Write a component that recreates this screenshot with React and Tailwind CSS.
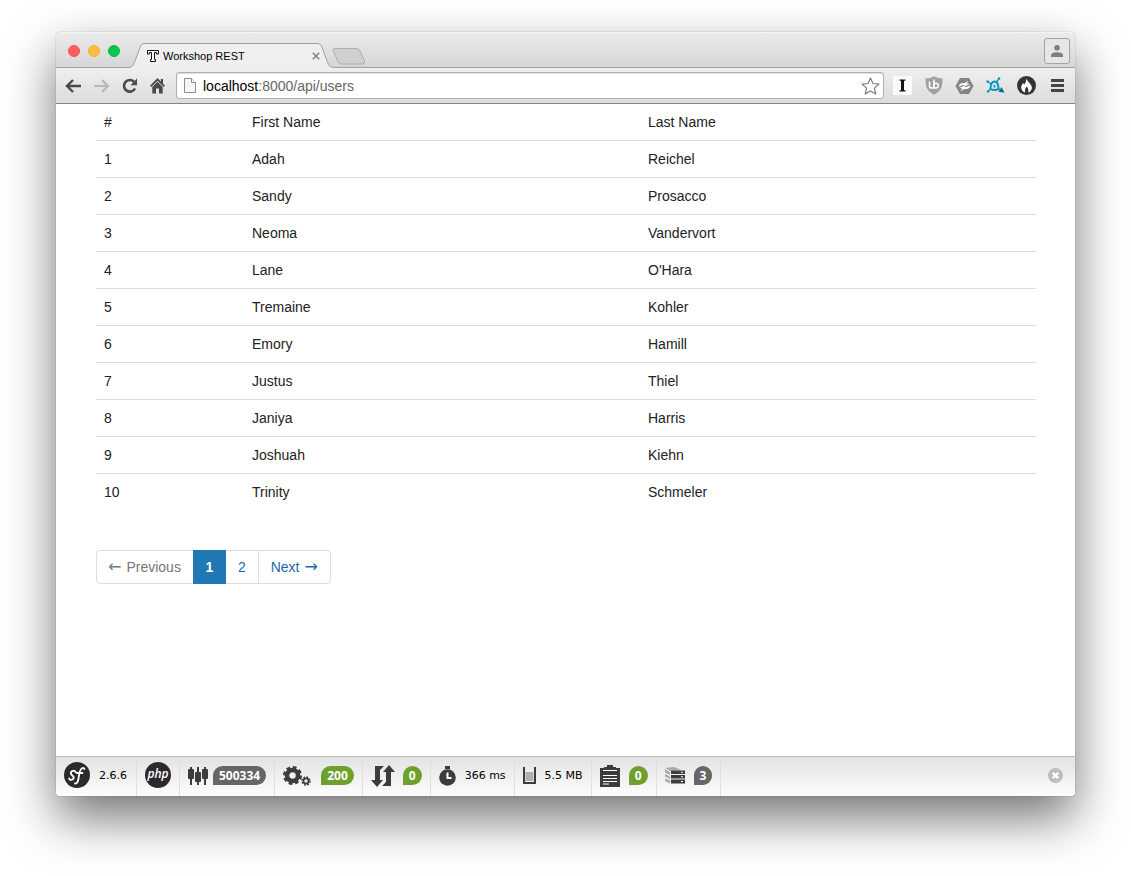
import React from "react";

const users = [
  ["1", "Adah", "Reichel"],
  ["2", "Sandy", "Prosacco"],
  ["3", "Neoma", "Vandervort"],
  ["4", "Lane", "O'Hara"],
  ["5", "Tremaine", "Kohler"],
  ["6", "Emory", "Hamill"],
  ["7", "Justus", "Thiel"],
  ["8", "Janiya", "Harris"],
  ["9", "Joshuah", "Kiehn"],
  ["10", "Trinity", "Schmeler"],
];

function TabStrip() {
  return (
    <div className="flex h-9 items-stretch rounded-t-[5px] border-b border-[#a0a0a0] border-t border-t-[#f4f4f4] bg-linear-to-b from-[#ebebeb] to-[#d6d6d6]">
      <div className="flex items-center gap-2 pt-[2px] pl-3">
        <button aria-label="Close window" className="size-3 rounded-full border border-[#ee5550] bg-[#fc605c]" />
        <button aria-label="Minimise window" className="size-3 rounded-full border border-[#eeb03a] bg-[#fdbc40]" />
        <button aria-label="Zoom window" className="size-3 rounded-full border border-[#12b944] bg-[#05c84b]" />
      </div>
      <div className="relative -mb-px ml-2 flex w-[208px] items-center pt-[14px] pr-4 pb-1 pl-[19px]">
        <svg className="absolute bottom-0 left-0" width="210" height="25" viewBox="0 0 210 25" fill="none" aria-hidden="true">
          <path d="M0 24.5C4 24.5 5 23 6 20.5L12 4.5C13 1.5 14 .5 17 .5H189C192 .5 193 1.500 194 4.500L200 20.500C201 23 202 24.500 208 24.500V25H0Z" fill="#efefef" />
          <path d="M0 24.500C4 24.500 5 23 6 20.500L12 4.500C13 1.500 14 .5 17 .5H189C192 .5 193 1.500 194 4.500L200 20.500C201 23 202 24.500 208 24.500" stroke="#a0a0a0" />
        </svg>
        <svg className="relative mr-1 shrink-0" width="12" height="12" viewBox="0 0 12 12" fill="#fff" stroke="#111" aria-hidden="true">
          <path d="M.5 .5H11.500V4H9.500V2.500H7.500V9.500H8.500V11.500H3.500V9.500H4.500V2.500H2.500V4H.5Z" />
        </svg>
        <span className="relative flex-1 text-[11px] leading-3 text-black">Workshop REST</span>
        <button aria-label="Close tab" className="relative">
          <svg width="8" height="8" viewBox="0 0 8 8" stroke="#808080" strokeWidth="1.500"><path d="M.8 .8 7.200 7.200M7.200 .8 .8 7.200" /></svg>
        </button>
      </div>
      <button aria-label="New tab" className="-ml-1 self-end pb-[2px]">
        <svg className="block" width="34" height="17" viewBox="0 0 34 17">
          <path d="M3 .5H24Q27 .5 28 3L32.500 13Q33.200 16 30 16H10Q7 16 6 13.500L1.200 3Q.5 .5 3 .5Z" fill="#d0d0d0" stroke="#adadad" />
        </svg>
      </button>
      <button aria-label="Profile" className="mt-[5px] mr-[5px] mb-[3px] ml-auto flex w-[26px] items-center justify-center rounded-[3px] border border-[#a3a3a3] bg-[#e6e6e6]">
        <svg width="12" height="12" viewBox="0 0 12 12" fill="#7f7f7f"><circle cx="6" cy="2.800" r="2.800" /><path d="M0 12V10.500C0 8 3 7.300 6 7.300S12 8 12 10.500V12Z" /></svg>
      </button>
    </div>
  );
}

function Toolbar() {
  return (
    <div className="flex h-9 items-center border-b border-[#858585] bg-linear-to-b from-[#efefef] to-[#dcdcdc] pr-[11px] pl-[9px]">
      <div className="flex items-center gap-3">
        <button aria-label="Back">
          <svg width="17" height="14" viewBox="0 0 17 14" fill="none" stroke="#4a4a4a" strokeWidth="2.400"><path d="M8 1 2 7l6 6M2 7H16" /></svg>
        </button>
        <button aria-label="Forward">
          <svg width="16" height="14" viewBox="0 0 16 14" fill="none" stroke="#b9b9b9" strokeWidth="2.200"><path d="M8 1l6 6-6 6M14 7H0" /></svg>
        </button>
        <button aria-label="Reload">
          <svg width="16" height="16" viewBox="0 0 16 16"><path d="M13 10.500A5.800 5.800 0 1 1 12 3.800" fill="none" stroke="#4a4a4a" strokeWidth="2.600" /><path d="M15 .5V7.200H8.500Z" fill="#4a4a4a" /></svg>
        </button>
        <button aria-label="Home">
          <svg width="15" height="16" viewBox="0 0 15 16" fill="#4a4a4a"><path d="M7.500 0 0 7.700l1.300 1.300L7.500 2.800l6.200 6.200L15 7.700l-2-2V1h-2.200v2.400Z" /><path d="M2.300 9 7.500 3.800 12.700 9V15.500H9V10.500H6V15.500H2.300Z" /></svg>
        </button>
      </div>
      <form className="ml-[11px] flex h-[27px] flex-1 items-center rounded-[3px] border border-[#b0b0b0] bg-white pr-[3px] pl-[7px] shadow-[inset_0_1px_1px_#ddd]">
        <svg width="12" height="15" viewBox="0 0 12 15" fill="#f6f6f6" stroke="#8d8d8d"><path d="M.5 .5H7.500L11.500 4.500V14.500H.5Z" /><path d="M7.500 .5V4.500H11.500" fill="#fff" /></svg>
        <div className="relative ml-[7px] flex-1">
          <div aria-hidden="true" className="text-[14px] leading-5 whitespace-pre text-[#666]"><span className="text-black">localhost</span>:8000/api/users</div>
          <input aria-label="Address" defaultValue="localhost:8000/api/users" className="absolute inset-0 w-full bg-transparent text-[14px] leading-5 text-transparent outline-none" />
        </div>
        <button type="button" aria-label="Bookmark">
          <svg width="19" height="18" viewBox="0 0 19 18" fill="#fff" stroke="#7d7d7d" strokeWidth="1.200" strokeLinejoin="round"><path d="M9.500 1 11.900 6.500 18 7.100 13.400 11.100 14.800 17 9.500 13.900 4.200 17 5.600 11.100 1 7.100 7.100 6.500Z" /></svg>
        </button>
      </form>
      <div className="ml-[9px] flex items-center gap-3">
        <button aria-label="Instapaper" className="mr-px size-[19px] bg-[#fafafa]">
          <svg width="19" height="19" viewBox="0 0 19 19" fill="#111"><path d="M6.500 3.500H12.500V4.500L11 5V14L12.500 14.500V15.500H6.500V14.500L8 14V5L6.500 4.500Z" /></svg>
        </button>
        <button aria-label="uBlock">
          <svg width="18" height="19" viewBox="0 0 18 19"><path d="M9 .3Q12.500 2.500 17.500 2.500C17.500 11 16 15 9 18.700C2 15 .5 11 .5 2.500Q5.500 2.500 9 .3Z" fill="#a0a0a0" /><path d="M4.500 5.500V10.200Q4.500 12 6.500 12H8.800V5.500M9 3.500V12M8.800 9.500Q8.800 7.300 11 7.300T13.300 9.600 11 12H8.800" fill="none" stroke="#fff" strokeWidth="1.500" /></svg>
        </button>
        <button aria-label="Postman">
          <svg width="19" height="18" viewBox="0 0 19 18"><path d="M5 1H14L18.500 9 14 17H5L.5 9Z" fill="#858585" /><path d="M3.500 9.500C4 6.500 7.500 5.500 10 6L13 3.800 12 6.700 15 7 9.500 9.200 9 7.800ZM15.500 8.500C15 11.500 11.500 12.500 9 12L6 14.200 7 11.300 4 11 9.500 8.800 10 10.200Z" fill="#fff" /></svg>
        </button>
        <button aria-label="Request tool">
          <svg width="19" height="17" viewBox="0 0 19 17" fill="none" stroke="#1295b8"><path d="M4.500 12C4.500 7 6 4.500 8.700 4.500S12.500 7 12.500 12Q8.500 14 4.500 12Z" fill="#c9f1fa" strokeWidth="2" /><path d="M10.500 5 13 1.500M5 7 1.500 4.500M4.500 12 2 14.500M12 11.500 16 14" strokeWidth="1.300" /><path d="M13 1.500h.1M1.500 4.500h.1M2 14.500h.1" strokeWidth="2.500" strokeLinecap="round" /><path d="M8.500 8v2.500" strokeWidth="2" /><path d="M15.500 10 18.500 15.500 12.500 15Z" fill="#08708f" stroke="none" /></svg>
        </button>
        <button aria-label="Flame">
          <svg width="19" height="19" viewBox="0 0 19 19"><circle cx="9.500" cy="9.500" r="9.500" fill="#333" /><path d="M9.200 2C9.500 5 13.800 7 14.800 11C15.200 14 13 16.200 11 16.500C12 14 11 12 9.700 10.500C8.500 12 7.300 14 8.300 16.500C5.500 16 4 13.500 4.200 11C4.500 9 5.500 8 6.300 7L7.300 8.500C8.700 6.500 9.500 4.500 9.200 2Z" fill="#fff" /></svg>
        </button>
        <button aria-label="Menu" className="ml-[3px]">
          <svg width="13" height="13" viewBox="0 0 13 13" fill="#454545"><path d="M0 0H13V3H0ZM0 5H13V8H0ZM0 10H13V13H0Z" /></svg>
        </button>
      </div>
    </div>
  );
}

function ArrowGlyph({ children }) {
  return <span className="font-['DejaVu_Sans',sans-serif] text-[16px] leading-5">{children}</span>;
}

function UsersPage() {
  return (
    <main className="flex-1 pr-[39px] pl-10 text-[14px] leading-5 text-[#222]">
      <table className="w-full table-fixed border-collapse text-left">
        <colgroup>
          <col className="w-[148px]" />
          <col />
          <col />
        </colgroup>
        <thead>
          <tr className="border-b border-[#ddd]">
            {["#", "First Name", "Last Name"].map((h) => (
              <th key={h} className="p-2 font-normal">{h}</th>
            ))}
          </tr>
        </thead>
        <tbody>
          {users.map((row) => (
            <tr key={row[0]} className="border-b border-[#ddd] last:border-b-0">
              {row.map((cell) => (
                <td key={cell} className="p-2">{cell}</td>
              ))}
            </tr>
          ))}
        </tbody>
      </table>
      <nav aria-label="Pagination" className="mt-10">
        <ul className="inline-flex h-[34px] items-stretch rounded-[4px] border border-[#ddd]">
          <li className="flex gap-[5px] py-[6px] pr-3 pl-[11px] text-[#777]"><ArrowGlyph>←</ArrowGlyph>Previous</li>
          <li className="-my-px bg-[#2079b5] text-white"><a href="#page-1" aria-current="page" className="block w-[33px] py-[7px] text-center font-bold">1</a></li>
          <li className="text-[#2368a9]"><a href="#page-2" className="block px-3 py-[6px]">2</a></li>
          <li className="border-l border-[#ddd] text-[#2368a9]"><a href="#page-2" className="flex gap-[5px] px-3 py-[6px]">Next<ArrowGlyph>→</ArrowGlyph></a></li>
        </ul>
      </nav>
    </main>
  );
}

function Block({ children, className }) {
  return <div className={"flex items-center border-r border-[#e0e0e0] pb-[2px] " + className}>{children}</div>;
}

function Badge({ children, green, className = "" }) {
  return (
    <span className={"flex h-[19px] items-center rounded-[10px] rounded-bl-none px-[6px] font-['Open_Sans',sans-serif] text-[12px] leading-4 font-bold text-white " + (green ? "bg-[#6f9f2c] " : "bg-[#666] ") + className}>
      {children}
    </span>
  );
}

function DebugBar() {
  return (
    <footer className="flex h-10 items-stretch rounded-b-[4px] border-t border-[#bbb] bg-linear-to-b from-[#e3e3e3] to-[#fdfdfd] pl-2 font-['DejaVu_Sans',sans-serif] text-[11px] leading-4 text-black">
      <Block className="gap-[9px] pr-[9px]">
        <svg width="26" height="28" viewBox="0 0 26 28"><circle cx="13" cy="13" r="13" fill="#2b292c" /><path d="M11.500 10C11.500 8 7 8.500 6.800 11C6.500 13.500 10.500 13.500 9.700 16.200C8.800 18.500 5 18.300 5.200 16.300M11 21.500C15.500 22 14 13.500 16 9C17.200 6 19.500 5 20.500 7M12.800 11H18.500" fill="none" stroke="#fff" strokeWidth="1.800" strokeLinecap="round" /></svg>
        <span>2.6.6</span>
      </Block>
      <Block className="px-2">
        <svg width="26" height="28" viewBox="0 0 26 28"><circle cx="13" cy="13" r="13" fill="#2b292c" /><text x="13" y="16" textAnchor="middle" fill="#fff" fontFamily="Open Sans" fontSize="12" fontStyle="italic" fontWeight="600">php</text></svg>
      </Block>
      <Block className="gap-[5px] px-2">
        <svg width="20" height="19" viewBox="0 0 20 19" fill="#3c3c3c"><path d="M2 1H4V19H2ZM9 1H11V19H9ZM16 1H18V19H16Z" /><rect y="3" width="6" height="10" rx="1" /><rect x="7" y="6" width="6" height="10" rx="1" /><rect x="14" y="3" width="6" height="10" rx="1" /></svg>
        <Badge>500334</Badge>
      </Block>
      <Block className="gap-[10px] px-2">
        <svg width="28" height="20" viewBox="0 0 28 20" fill="none" stroke="#3c3c3c"><circle cx="9.500" cy="9.500" r="5.500" strokeWidth="4.500" /><circle cx="9.500" cy="9.500" r="8.300" strokeWidth="2.400" strokeDasharray="3.800 2.720" /><circle cx="23" cy="15" r="2.600" strokeWidth="1.800" /><circle cx="23" cy="15" r="4" strokeWidth="1.400" strokeDasharray="1.800 1.340" /></svg>
        <Badge green>200</Badge>
      </Block>
      <Block className="gap-2 px-2">
        <svg width="24" height="22" viewBox="0 0 24 22" fill="#3c3c3c"><path d="M4 1H13L9 5V15H12L6 22 0 15H4ZM20 21H11L15 17V7H12L18 0 24 7H20Z" /></svg>
        <Badge green>0</Badge>
      </Block>
      <Block className="gap-[9px] px-2">
        <svg width="17" height="20" viewBox="0 0 17 20"><path d="M6 0H11V3H6Z" fill="#3c3c3c" /><circle cx="8.500" cy="11.500" r="8.300" fill="#3c3c3c" /><path d="M8.500 6.500V12H12.500" fill="none" stroke="#fff" strokeWidth="2" /></svg>
        <span>366 ms</span>
      </Block>
      <Block className="gap-[9px] px-2">
        <svg width="13" height="18" viewBox="0 0 13 18"><path d="M2.500 5H10.500V14H2.500Z" fill="#b0b0b0" /><path d="M1 0V16H12V0" fill="none" stroke="#3c3c3c" strokeWidth="2" /></svg>
        <span>5.5 MB</span>
      </Block>
      <Block className="gap-[9px] px-2">
        <svg width="20" height="22" viewBox="0 0 20 22"><path d="M0 3H4V2H7V0H13V2H16V3H20V22H0Z" fill="#3c3c3c" /><path d="M3 5.500H17M3 10.500H17M3 13.500H17M3 16.500H17M3 19H9" stroke="#fff" /></svg>
        <Badge green>0</Badge>
      </Block>
      <Block className="gap-[9px] px-2">
        <svg width="20" height="17" viewBox="0 0 20 17"><path d="M0 1 9 0 15 2.500V3L5 4ZM0 2.500 5 5V8L0 5.500ZM0 7 5 9.500V12L0 9.500ZM0 11.500 5 13.500V16.500L0 14Z" fill="#aaa" /><path d="M6 3.500H20V7H6ZM6 8H20V11.500H6ZM6 12.500H20V16.500H6Z" fill="#3c3c3c" /><path d="M16 5.300H18M16 9.800H18M16 14.500H18" stroke="#fff" /></svg>
        <Badge>3</Badge>
      </Block>
      <button aria-label="Close toolbar" className="mr-3 mb-[2px] ml-auto">
        <svg width="15" height="15" viewBox="0 0 15 15"><circle cx="7.500" cy="7.500" r="7.500" fill="#bdbdbd" /><path d="M4.800 4.800 10.200 10.200M10.200 4.800 4.800 10.200" stroke="#fff" strokeWidth="2.500" /></svg>
      </button>
    </footer>
  );
}

export default function App() {
  return (
    <div className="flex min-h-screen flex-col overflow-hidden bg-white px-14 pt-8 pb-20 font-['Liberation_Sans',Arial,sans-serif]">
      <div className="flex flex-1 flex-col rounded-t-[5px] rounded-b-[4px] bg-white shadow-[0_0_1px_rgba(0,0,0,0.6),0_22px_50px_rgba(0,0,0,0.55)]">
        <TabStrip />
        <Toolbar />
        <UsersPage />
        <DebugBar />
      </div>
    </div>
  );
}
